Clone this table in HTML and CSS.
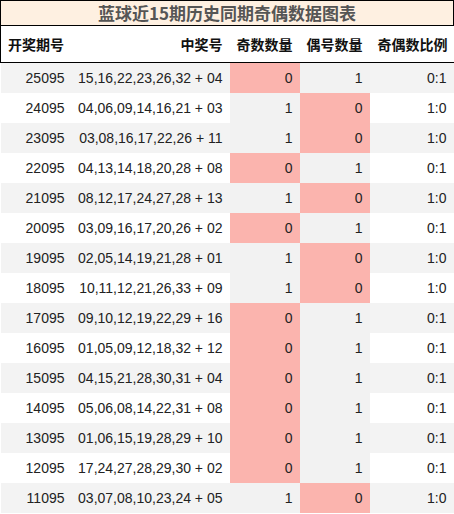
FILE: index.html
```html
<!DOCTYPE html>
<html>
<head>
<meta charset="utf-8">
<link rel="stylesheet" href="styles.css">
</head>
<body>
<div class="title">蓝球近15期历史同期奇偶数据图表</div>
<table class="grid">
<colgroup><col class="c1"><col class="c2"><col class="c3"><col class="c4"><col class="c5"></colgroup>
<thead>
<tr><th class="left">开奖期号</th><th>中奖号</th><th>奇数数量</th><th>偶号数量</th><th>奇偶数比例</th></tr>
</thead>
<tbody>
<tr><td>25095</td><td>15,16,22,23,26,32 + 04</td><td class="n hot">0</td><td class="n">1</td><td>0:1</td></tr>
<tr><td>24095</td><td>04,06,09,14,16,21 + 03</td><td class="n">1</td><td class="n hot">0</td><td>1:0</td></tr>
<tr><td>23095</td><td>03,08,16,17,22,26 + 11</td><td class="n">1</td><td class="n hot">0</td><td>1:0</td></tr>
<tr><td>22095</td><td>04,13,14,18,20,28 + 08</td><td class="n hot">0</td><td class="n">1</td><td>0:1</td></tr>
<tr><td>21095</td><td>08,12,17,24,27,28 + 13</td><td class="n">1</td><td class="n hot">0</td><td>1:0</td></tr>
<tr><td>20095</td><td>03,09,16,17,20,26 + 02</td><td class="n hot">0</td><td class="n">1</td><td>0:1</td></tr>
<tr><td>19095</td><td>02,05,14,19,21,28 + 01</td><td class="n">1</td><td class="n hot">0</td><td>1:0</td></tr>
<tr><td>18095</td><td>10,11,12,21,26,33 + 09</td><td class="n">1</td><td class="n hot">0</td><td>1:0</td></tr>
<tr><td>17095</td><td>09,10,12,19,22,29 + 16</td><td class="n hot">0</td><td class="n">1</td><td>0:1</td></tr>
<tr><td>16095</td><td>01,05,09,12,18,32 + 12</td><td class="n hot">0</td><td class="n">1</td><td>0:1</td></tr>
<tr><td>15095</td><td>04,15,21,28,30,31 + 04</td><td class="n hot">0</td><td class="n">1</td><td>0:1</td></tr>
<tr><td>14095</td><td>05,06,08,14,22,31 + 08</td><td class="n hot">0</td><td class="n">1</td><td>0:1</td></tr>
<tr><td>13095</td><td>01,06,15,19,28,29 + 10</td><td class="n hot">0</td><td class="n">1</td><td>0:1</td></tr>
<tr><td>12095</td><td>17,24,27,28,29,30 + 02</td><td class="n hot">0</td><td class="n">1</td><td>0:1</td></tr>
<tr><td>11095</td><td>03,07,08,10,23,24 + 05</td><td class="n">1</td><td class="n hot">0</td><td>1:0</td></tr>
</tbody>
</table>
</body>
</html>
```
FILE: styles.css
```css
html, body {
  margin: 0;
  padding: 0;
  background: #ffffff;
}
body {
  width: 454px;
  overflow: hidden;
  font-family: "Liberation Sans", "Noto Sans CJK SC", sans-serif;
  color: #222222;
}
.title {
  box-sizing: border-box;
  height: 26px;
  border: 1px solid #000000;
  background: #fef0e1;
  color: #555555;
  font-family: "Noto Sans CJK SC", sans-serif;
  font-weight: bold;
  font-size: 17px;
  line-height: 24px;
  text-align: center;
}
.grid {
  border-collapse: collapse;
  table-layout: fixed;
  width: 454px;
}
.c1 { width: 72px; }
.c2 { width: 157px; }
.c3 { width: 70px; }
.c4 { width: 70px; }
.c5 { width: 85px; }
.grid th {
  height: 36px;
  padding: 0 7px 0 0;
  font-family: "Noto Sans CJK SC", sans-serif;
  font-weight: bold;
  font-size: 14px;
  color: #111111;
  text-align: right;
  border-bottom: 1px solid #000000;
  white-space: nowrap;
}
.grid th.left {
  text-align: left;
  padding-left: 7px;
  border-left: 1px solid #000000;
}
.grid td {
  height: 30px;
  padding: 0 7px 0 0;
  font-size: 14px;
  text-align: right;
  white-space: nowrap;
}
.grid td:first-child { padding-right: 8px; }
.grid td:last-child { padding-right: 8px; }
.grid tbody tr:nth-child(odd) { background: #f3f3f3; }
.grid tbody tr:nth-child(even) { background: #ffffff; }
.grid td.n { background: #f2f2f2; }
.grid td.hot { background: #fbb4ae; }
```
